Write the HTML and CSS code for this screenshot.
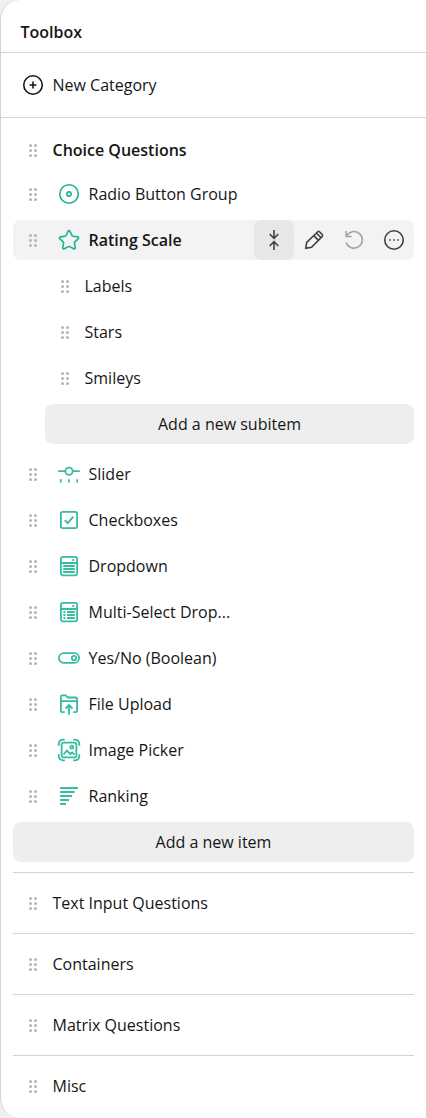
FILE: index.html
```html
<!DOCTYPE html>
<html lang="en">
<head>
<meta charset="utf-8">
<title>Toolbox</title>
<link rel="stylesheet" href="styles.css">
</head>
<body>
<svg class="sprite" aria-hidden="true">
  <symbol id="grip" viewBox="0 0 8 13"><g fill="currentColor"><circle cx="1.5" cy="1.5" r="1.5"/><circle cx="6.5" cy="1.5" r="1.5"/><circle cx="1.5" cy="6.5" r="1.5"/><circle cx="6.5" cy="6.5" r="1.5"/><circle cx="1.5" cy="11.5" r="1.5"/><circle cx="6.5" cy="11.5" r="1.5"/></g></symbol>
</svg>
<aside class="toolbox">
  <header class="title">Toolbox</header>
  <div class="new-category">
    <svg class="icon" viewBox="0 0 24 24"><circle cx="12" cy="12" r="9.25"/><path d="M12 8.5v7M8.5 12h7"/></svg>
    <span>New Category</span>
  </div>
  <div class="content">
    <div class="category active"><svg class="grip"><use href="#grip"/></svg><span>Choice Questions</span></div>
    <div class="items">
      <div class="item"><svg class="grip"><use href="#grip"/></svg>
        <svg class="icon" viewBox="0 0 24 24"><circle cx="12" cy="12" r="9.25"/><circle cx="12" cy="12" r="2.1"/></svg><span>Radio Button Group</span></div>
      <div class="item selected"><svg class="grip"><use href="#grip"/></svg>
        <svg class="icon" viewBox="0 0 24 24"><path d="M11 3.3a1.1 1.1 0 0 1 2 0l2 4.2q.3.7 1 .8l4.7.6a1.1 1.1 0 0 1 .5 1.9l-3.4 3.1q-.5.5-.4 1.2l.9 4.6a1.1 1.1 0 0 1-1.6 1.1l-4.1-2.2q-.6-.3-1.2 0l-4.1 2.2a1.1 1.1 0 0 1-1.6-1.1l.9-4.6q.1-.7-.4-1.2l-3.4-3.1a1.1 1.1 0 0 1 .5-1.9L8 8.3q.7-.1 1-.8z"/></svg><span>Rating Scale</span>
        <div class="actions">
          <div class="action pressed"><svg class="icon" viewBox="0 0 24 24"><path d="M12 2v8M7.7 6l4.3 4.3L16.3 6M12 22v-8M7.7 18l4.3-4.3 4.3 4.3"/></svg></div>
          <div class="action"><svg class="icon" viewBox="0 0 24 24"><path d="M3.8 20.2l.9-5.8L15.5 4q1.1-1.1 2.2 0l2.4 2.4q1.1 1.1 0 2.2L9.5 19.2zM11.7 7.6l4.8 4.8M14.3 5l4.8 4.8"/></svg></div>
          <div class="action disabled"><svg class="icon" viewBox="0 0 24 24"><path d="M4.2 3v5.5h5.5M4.5 8.2a8.3 8.3 0 1 1-.4 6.2"/></svg></div>
          <div class="action"><svg class="icon" viewBox="0 0 24 24"><circle cx="12" cy="12" r="9.25"/><path d="M7.2 12h1.6M11.2 12h1.6M15.2 12h1.6"/></svg></div>
        </div>
      </div>
      <div class="subitems">
        <div class="subitem"><svg class="grip"><use href="#grip"/></svg><span>Labels</span></div>
        <div class="subitem"><svg class="grip"><use href="#grip"/></svg><span>Stars</span></div>
        <div class="subitem"><svg class="grip"><use href="#grip"/></svg><span>Smileys</span></div>
        <div class="add">Add a new subitem</div>
      </div>
      <div class="item after-sub"><svg class="grip"><use href="#grip"/></svg>
        <svg class="icon soft" viewBox="0 0 24 24"><path d="M1.2 9.2h7M15.8 9.2h7M3.8 17.2v3.4M12 17.2v3.4M20.2 17.2v3.4"/><circle cx="12" cy="9.2" r="3.6"/></svg><span>Slider</span></div>
      <div class="item"><svg class="grip"><use href="#grip"/></svg>
        <svg class="icon soft" viewBox="0 0 24 24"><rect x="3.9" y="3.9" width="16.2" height="16.2" rx="1.8"/><path d="M7.8 12.2l2.9 2.9 5.6-6.5"/></svg><span>Checkboxes</span></div>
      <div class="item"><svg class="grip"><use href="#grip"/></svg>
        <svg class="icon soft" viewBox="0 0 24 24"><rect x="3.9" y="2.9" width="16.2" height="18.4" rx="2"/><path d="M4 9h16M15.4 6h1.8M6.2 12h11.6M6.2 15h11.6M6.2 18h11.6"/></svg><span>Dropdown</span></div>
      <div class="item"><svg class="grip"><use href="#grip"/></svg>
        <svg class="icon soft" viewBox="0 0 24 24"><rect x="3.9" y="2.9" width="16.2" height="18.4" rx="2"/><path d="M4 9h16M15.4 6h1.8M6.4 12h2M10 12h7.8M6.4 15h2M10 15h7.8M6.4 18h2M10 18h7.8"/></svg><span>Multi-Select Drop...</span></div>
      <div class="item"><svg class="grip"><use href="#grip"/></svg>
        <svg class="icon soft" viewBox="0 0 24 24"><rect x="1.9" y="7.1" width="20.2" height="9.8" rx="4.9"/><circle cx="17" cy="12" r="2.2"/></svg><span>Yes/No (Boolean)</span></div>
      <div class="item"><svg class="grip"><use href="#grip"/></svg>
        <svg class="icon soft" viewBox="0 0 24 24"><path d="M7.8 20.2H5.4a1.5 1.5 0 0 1-1.5-1.5V4.8a1.5 1.5 0 0 1 1.5-1.5h3.4l2 2.2h7.8a1.5 1.5 0 0 1 1.5 1.5v11.7a1.5 1.5 0 0 1-1.5 1.5h-2.4M4 9.2h16M12 22.7v-9.4M8.5 16.5l3.5-3.4 3.5 3.4"/></svg><span>File Upload</span></div>
      <div class="item"><svg class="grip"><use href="#grip"/></svg>
        <svg class="icon soft" viewBox="0 0 24 24"><rect x="4.6" y="4.6" width="14.8" height="14.8" rx="2"/><circle cx="14.8" cy="9.2" r="1.5"/><path d="M6.5 16.5l3.3-4 3.4 3.5 1.9-1.5 2.4 2.1M1.7 7.8V6.6q0-4.9 4.9-4.9h1.2M16.2 1.7h1.2q4.9 0 4.9 4.9v1.2M22.3 16.2v1.2q0 4.9-4.9 4.9h-1.2M7.8 22.3H6.6q-4.9 0-4.9-4.9v-1.2"/></svg><span>Image Picker</span></div>
      <div class="item"><svg class="grip"><use href="#grip"/></svg>
        <svg class="icon soft" viewBox="0 0 24 24"><path d="M3.2 4H21M3.2 8h14.5M3.2 12H15M3.2 16h8.8M3.2 20H9"/></svg><span>Ranking</span></div>
      <div class="add">Add a new item</div>
    </div>
    <div class="category"><svg class="grip"><use href="#grip"/></svg><span>Text Input Questions</span></div>
    <div class="category"><svg class="grip"><use href="#grip"/></svg><span>Containers</span></div>
    <div class="category"><svg class="grip"><use href="#grip"/></svg><span>Matrix Questions</span></div>
    <div class="category"><svg class="grip"><use href="#grip"/></svg><span>Misc</span></div>
  </div>
</aside>
</body>
</html>
```
FILE: styles.css
```css
* { box-sizing: border-box; }
body {
  margin: 0;
  background: #f0f0f0;
  color: #161616;
  font: 16px/24px "Open Sans", sans-serif;
}
.sprite { display: none; }
.toolbox {
  height: 1118px;
  overflow: hidden;
  background: #fff;
  border: solid #d4d4d4;
  border-width: 0 1px;
  border-radius: 20px 0 0 20px;
}
.title {
  height: 53px;
  padding: 20px 19.5px 0;
  font-weight: 600;
  border-bottom: 1px solid #d4d4d4;
}
.new-category {
  display: flex;
  align-items: center;
  gap: 7.5px;
  height: 65px;
  padding-left: 20px;
  border-bottom: 1px solid #d4d4d4;
}
.icon {
  flex: none;
  width: 24px;
  height: 24px;
  fill: none;
  stroke: currentColor;
  stroke-width: 1.6;
}
.grip {
  flex: none;
  width: 8px;
  height: 13px;
  color: #b5b5b5;
}
.content { padding: 0 12px; }
.category {
  display: flex;
  align-items: center;
  gap: 15.5px;
  height: 61px;
  padding-left: 16px;
  border-top: 1px solid #d4d4d4;
}
.category.active {
  height: 56px;
  padding-top: 8px;
  border-top: 0;
  font-weight: 600;
}
.items {
  display: flex;
  flex-direction: column;
  gap: 6px;
  padding-bottom: 10px;
}
.item {
  display: flex;
  align-items: center;
  height: 40px;
  padding-left: 16px;
  border-radius: 8px;
}
.item > .icon {
  margin: 0 7.5px 0 20px;
  color: #19b394;
}
.item > .icon.soft {
  color: #35bca1;
  stroke-width: 1.8;
}
.item.selected {
  background: #f3f3f3;
  font-weight: 600;
}
.item.after-sub { margin-top: 4px; }
.actions {
  display: flex;
  margin-left: auto;
}
.action {
  display: grid;
  place-items: center;
  width: 40px;
  height: 40px;
  border-radius: 8px;
  color: #404040;
}
.action.pressed { background: #e7e7e8; }
.action.disabled { color: #a5a5a5; }
.subitems {
  display: flex;
  flex-direction: column;
  gap: 6px;
  padding-left: 32px;
}
.subitem {
  display: flex;
  align-items: center;
  gap: 15.5px;
  height: 40px;
  padding-left: 16px;
}
.add {
  height: 40px;
  border-radius: 8px;
  background: #eee;
  line-height: 40px;
  text-align: center;
}
```
